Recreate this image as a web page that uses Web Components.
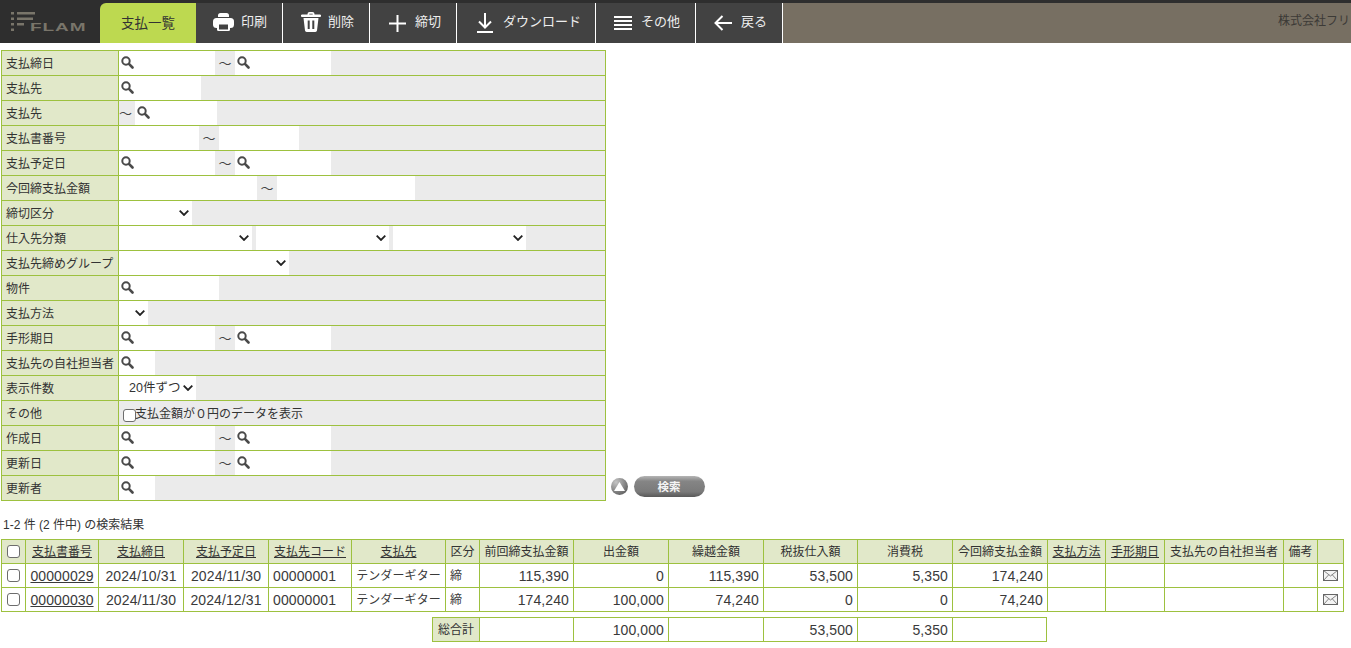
<!DOCTYPE html>
<html lang="ja"><head><meta charset="utf-8"><title>支払一覧</title>
<style>
html,body{margin:0;padding:0;background:#fff;color:#333;font:12px/16px "Liberation Sans","Noto Sans CJK JP",sans-serif;overflow:hidden}
body{width:1351px;height:648px}
</style></head><body>
<app-shell></app-shell>
<script>
const GREEN='#9dc13f',LABEL='#e1e8c9',GRAY='#ebebeb';
const FONT='"Liberation Sans","Noto Sans CJK JP",sans-serif';
function make(name,css,html){
  customElements.define(name,class extends HTMLElement{
    connectedCallback(){
      if(this.shadowRoot)return;
      const r=this.attachShadow({mode:'open'});
      r.innerHTML='<style>'+css+'</style>'+(typeof html==='function'?html(this):html);
    }
  });
}
const icons={
 print:'<svg width="21" height="18" viewBox="0 0 21 18"><path fill="#fff" d="M5 2.500A2.500 2.500 0 0 1 7.500 0h6A2.500 2.500 0 0 1 16 2.500V4H5z"/><rect x="0" y="5" width="21" height="10" rx="3.500" fill="#fff"/><rect x="4" y="10" width="13" height="8" rx="1.500" fill="#fff"/><rect x="6" y="11.500" width="9" height="5" fill="#424242"/></svg>',
 trash:'<svg width="20" height="20" viewBox="0 0 20 20"><path fill="#fff" d="M6.500 2.500V2a2 2 0 0 1 2-2h3a2 2 0 0 1 2 2v.5H19a1 1 0 0 1 0 2.500H1a1 1 0 0 1 0-2.500zM8.300 2.500h3.400V1.800H8.300zM2.500 6h15l-1.500 12.500A1.700 1.700 0 0 1 14.300 20H5.700A1.700 1.700 0 0 1 4 18.500z"/><path stroke="#424242" stroke-width="2" d="M7.700 8.500v8.500M12.300 8.500v8.500"/></svg>',
 plus:'<svg width="17" height="17" viewBox="0 0 17 17"><path stroke="#fff" stroke-width="2" d="M0 8.500h17M8.500 0v17"/></svg>',
 down:'<svg width="16" height="20" viewBox="0 0 16 20"><path fill="none" stroke="#fff" stroke-width="2" d="M8 0v14M2 8.500 8 14.500 14 8.500M0 19h16"/></svg>',
 menu:'<svg width="18" height="16" viewBox="0 0 18 16"><path stroke="#fff" stroke-width="2" d="M0 2h18M0 6h18M0 10h18M0 14h18"/></svg>',
 back:'<svg width="18" height="16" viewBox="0 0 18 16"><path fill="none" stroke="#fff" stroke-width="2" d="M18 8H2M8.500 1 1.500 8l7 7"/></svg>',
 glass:'<svg width="13" height="13" viewBox="0 0 13 13"><circle cx="5" cy="5" r="3.700" fill="none" stroke="#4a4a4a" stroke-width="2"/><path stroke="#4a4a4a" stroke-width="2.600" stroke-linecap="round" d="M8.200 8.200 11.500 11.500"/></svg>',
 mail:'<svg width="15" height="11" viewBox="0 0 15 11"><rect x=".5" y=".5" width="14" height="10" fill="#f4f4f4" stroke="#666"/><path fill="none" stroke="#666" stroke-width=".8" d="M.5.500 7.500 6 14.500.500M.5 10.500 5.700 4.800M14.500 10.500 9.300 4.800"/></svg>'
};
make('tool-button',`:host{display:flex;align-items:center;height:40px;box-sizing:border-box;background:#424242;border-right:1px solid #fff;color:#eee;font-size:13px;white-space:nowrap;flex:none}
 .i{display:flex;justify-content:center;align-items:center;flex:none}`,
 h=>`<span class="i" style="width:${h.getAttribute('iw')}px;margin-left:${h.getAttribute('il')}px;margin-top:${h.getAttribute('it')||0}px">${icons[h.getAttribute('icon')]}</span><span style="margin-left:${h.getAttribute('tl')}px;margin-top:-2px"><slot></slot></span>`);
make('app-logo',`:host{display:block;width:100px;height:40px;background:#2e2e2e;position:relative;overflow:hidden;flex:none}
 svg{position:absolute;left:11px;top:9px}
 b{position:absolute;left:30px;top:20px;font:700 10px/10px "Liberation Sans",sans-serif;color:#79756a;transform:scaleX(1.9);transform-origin:0 0;letter-spacing:.5px}`,
 `<svg width="24" height="19" viewBox="0 0 24 19" fill="#79756a"><rect x="0" y="0" width="3" height="2.500"/><rect x="6" y="0" width="18" height="2.500"/><rect x="0" y="5.500" width="3" height="2.500"/><rect x="6" y="5.500" width="16" height="2.500"/><rect x="0" y="11" width="3" height="2.500"/><rect x="6" y="11" width="7" height="2.500"/><rect x="0" y="16.500" width="3" height="2.500"/></svg><b>FLAM</b>`);
make('app-header',`:host{display:block;height:43px;background:#2e2e2e;padding-top:3px;box-sizing:border-box}
 .bar{display:flex;height:40px;overflow:hidden}
 .tab{flex:none;width:96px;height:40px;background:#bdd950;border-radius:6px 0 0 0;color:#333;font-size:13.500px;display:flex;align-items:center;justify-content:center;padding-top:1px;box-sizing:border-box}
 .co{flex:1;min-width:0;background:#776f62;color:#3c3a36;font-size:12px;white-space:nowrap;overflow:hidden;padding:10px 0 0 495px;box-sizing:border-box;line-height:16px}`,
 `<div class="bar"><app-logo></app-logo><div class="tab">支払一覧</div>
 <tool-button style="width:87px" icon="print" il="17" iw="21" tl="7" it="-2">印刷</tool-button>
 <tool-button style="width:87px" icon="trash" il="18" iw="20" tl="7" it="-3">削除</tool-button>
 <tool-button style="width:87px" icon="plus" il="18" iw="18" tl="9">締切</tool-button>
 <tool-button style="width:139px" icon="down" il="20" iw="16" tl="10">ダウンロード</tool-button>
 <tool-button style="width:100px" icon="menu" il="18" iw="18" tl="9">その他</tool-button>
 <tool-button style="width:87px" icon="back" il="18" iw="18" tl="9">戻る</tool-button>
 <div class="co">株式会社フリ</div></div>`);
make('search-row',`:host{display:grid;grid-template-columns:117px 1fr;grid-template-rows:24px;height:25px;box-sizing:border-box;border-bottom:1px solid ${GREEN}}
 .l{background:${LABEL};border-right:1px solid ${GREEN};padding:2px 0 0 4px;line-height:22px;height:24px;white-space:nowrap;overflow:hidden;box-sizing:border-box}
 .f{background:${GRAY};display:flex;align-items:stretch;min-width:0;height:24px;line-height:24px;overflow:hidden}`,
 h=>`<div class="l">${h.getAttribute('label')}</div><div class="f"><slot></slot></div>`);
make('lookup-field',`:host{display:block;height:24px;background:#fff;position:relative}
 svg{position:absolute;left:2px;top:5px}
 input{all:unset;display:block;box-sizing:border-box;width:100%;height:24px;padding-left:18px}`,
 h=>`${icons.glass}<input type="text"><style>:host{width:${h.getAttribute('w')}px}</style>`);
make('plain-field',`:host{display:block;height:24px;background:#fff}input{all:unset;display:block;width:100%;height:24px}`,
 h=>`<input type="text"><style>:host{width:${h.getAttribute('w')}px}</style>`);
make('range-sep',`:host{display:flex;align-items:center;justify-content:center;height:24px;font:13px/24px "Noto Sans CJK JP",sans-serif;color:#444;box-sizing:border-box}`,
 h=>`<slot></slot><style>:host{width:${h.getAttribute('w')||20}px;padding-right:${h.getAttribute('pr')||0}px}</style>`);
make('date-range',`:host{display:flex}`,`<lookup-field w="96"></lookup-field><range-sep>～</range-sep><lookup-field w="96"></lookup-field>`);
make('pick-select',`:host{display:block;height:24px;background:#fff;position:relative;color:#333}
 select{appearance:none;-webkit-appearance:none;border:0;background:transparent;width:100%;height:24px;padding:0 0 0 10px;font:12.500px/24px ${FONT};color:#333;outline:0;display:block}
 svg{position:absolute;right:3px;top:9px}`,
 h=>`<select>${h.getAttribute('v')?`<option>${h.getAttribute('v')}</option>`:'<option></option>'}</select><svg width="10" height="6" viewBox="0 0 10 6"><path fill="none" stroke="#222" stroke-width="1.800" d="M.7.700 5 5 9.300.700"/></svg><style>:host{width:${h.getAttribute('w')}px;${h.getAttribute('mr')?'margin-right:'+h.getAttribute('mr')+'px':''}}</style>`);
make('tick-box',`:host{display:block;width:13px;height:13px}
 input{appearance:none;-webkit-appearance:none;display:block;margin:0;width:13px;height:13px;box-sizing:border-box;border:1px solid #6d6d6d;border-radius:3px;background:#fff}`,`<input type="checkbox">`);
make('search-form',`:host{display:block;width:605px;box-sizing:border-box;border:1px solid ${GREEN};border-bottom:0;flex:none}`,`<slot></slot>`);
make('search-actions',`:host{display:flex;align-items:center;gap:6px;margin:0 0 4px 5px}
 .t{width:17px;height:17px;border-radius:50%;background:radial-gradient(circle at 30% 25%,#c4c4c4,#5c5c5c 85%);display:flex;align-items:center;justify-content:center}
 .b{width:71px;height:21px;box-sizing:border-box;border-radius:11px;background:linear-gradient(#b5b5b5 0,#858585 25%,#7a7a7a 75%,#595959 100%);color:#f4f4f4;font-size:11.500px;font-weight:700;display:flex;align-items:center;justify-content:center;padding-right:1px}`,
 `<span class="t"><svg width="11" height="9" viewBox="0 0 11 9"><path fill="#fff" d="M5.500 0 11 9H0z"/></svg></span><span class="b">検索</span>`);
const cols=[24,73,85,85,83,94,34,94,95,95,94,95,95,58,59,119,34,26];
const cellCss=`:host{display:block}
 table{border-collapse:collapse;table-layout:fixed;color:#333}
 th,td{border:1px solid ${GREEN};padding:0 4px;height:24px;box-sizing:border-box;font-weight:400;font-size:12px;line-height:16px;white-space:nowrap;overflow:hidden}
 th{background:${LABEL};text-align:center}
 td{font-size:14px;letter-spacing:.1px;color:#3a3a3a}
 td.j{font-size:12px;padding-top:1px}
 .r{text-align:right}.c{text-align:center}
 u{text-decoration:underline}
 tick-box{margin:0 auto}
 svg{display:block;margin:0 auto}`;
const colgroup=a=>'<colgroup>'+a.map(w=>`<col style="width:${w}px">`).join('')+'</colgroup>';
const row=(no,a,b,v)=>`<tr><td style="padding:0"><tick-box></tick-box></td><td style="padding:0 4px" class="c"><u>${no}</u></td><td class="c" style="padding:0">${a}</td><td class="c" style="padding:0">${b}</td><td>00000001</td><td class="j c" style="padding:1px 0 0">テンダーギター</td><td class="j">締</td>${v.map(x=>`<td class="r">${x}</td>`).join('')}<td></td><td></td><td></td><td></td><td style="padding:0">${icons.mail}</td></tr>`;
make('result-table',cellCss,`<table style="width:${cols.reduce((a,b)=>a+b)}px">${colgroup(cols)}
<tr><th style="padding:0"><tick-box></tick-box></th><th><u>支払書番号</u></th><th><u>支払締日</u></th><th><u>支払予定日</u></th><th style="padding:0"><u>支払先コード</u></th><th><u>支払先</u></th><th style="padding:0">区分</th><th style="padding:0">前回締支払金額</th><th>出金額</th><th>繰越金額</th><th>税抜仕入額</th><th>消費税</th><th style="padding:0">今回締支払金額</th><th style="padding:0"><u>支払方法</u></th><th style="padding:0"><u>手形期日</u></th><th style="padding:0">支払先の自社担当者</th><th style="padding:0">備考</th><th></th></tr>
${row('00000029','2024/10/31','2024/11/30',['115,390','0','115,390','53,500','5,350','174,240'])}
${row('00000030','2024/11/30','2024/12/31',['174,240','100,000','74,240','0','0','74,240'])}
</table>`);
const tc=[47,94,95,95,94,95,94];
make('total-table',cellCss+`:host{margin:5px 0 0 431px}`,`<table style="width:${tc.reduce((a,b)=>a+b)}px">${colgroup(tc)}<tr><th style="padding:0">総合計</th><td></td><td class="r">100,000</td><td></td><td class="r">53,500</td><td class="r">5,350</td><td></td></tr></table>`);
make('app-shell',`:host{display:block}
 .top{display:flex;align-items:flex-end;margin:7px 0 0 1px}
 .count{margin:16px 0 6px 3px;line-height:16px;font-size:12px}
 .res{margin-left:1px}
 label{display:flex;align-items:center;margin-left:4px;white-space:nowrap;height:24px;box-sizing:border-box;padding-top:1px}
 label span{margin-left:-1px}
 tick-box{margin-top:3px}`,
 `<app-header></app-header>
 <div class="top"><search-form>
 <search-row label="支払締日"><date-range></date-range></search-row>
 <search-row label="支払先"><lookup-field w="82"></lookup-field></search-row>
 <search-row label="支払先"><range-sep w="16" pr="3">～</range-sep><lookup-field w="82"></lookup-field></search-row>
 <search-row label="支払書番号"><plain-field w="80"></plain-field><range-sep>～</range-sep><plain-field w="80"></plain-field></search-row>
 <search-row label="支払予定日"><date-range></date-range></search-row>
 <search-row label="今回締支払金額"><plain-field w="138"></plain-field><range-sep>～</range-sep><plain-field w="138"></plain-field></search-row>
 <search-row label="締切区分"><pick-select w="73"></pick-select></search-row>
 <search-row label="仕入先分類"><pick-select w="133" mr="4"></pick-select><pick-select w="133" mr="4"></pick-select><pick-select w="133"></pick-select></search-row>
 <search-row label="支払先締めグループ"><pick-select w="170"></pick-select></search-row>
 <search-row label="物件"><lookup-field w="100"></lookup-field></search-row>
 <search-row label="支払方法"><pick-select w="29"></pick-select></search-row>
 <search-row label="手形期日"><date-range></date-range></search-row>
 <search-row label="支払先の自社担当者"><lookup-field w="36"></lookup-field></search-row>
 <search-row label="表示件数"><pick-select w="77" v="20件ずつ"></pick-select></search-row>
 <search-row label="その他"><label><tick-box></tick-box><span>支払金額が０円のデータを表示</span></label></search-row>
 <search-row label="作成日"><date-range></date-range></search-row>
 <search-row label="更新日"><date-range></date-range></search-row>
 <search-row label="更新者"><lookup-field w="36"></lookup-field></search-row>
 </search-form><search-actions></search-actions></div>
 <div class="count">1-2 件 (2 件中) の検索結果</div>
 <div class="res"><result-table></result-table><total-table></total-table></div>`);
</script>
</body></html>
